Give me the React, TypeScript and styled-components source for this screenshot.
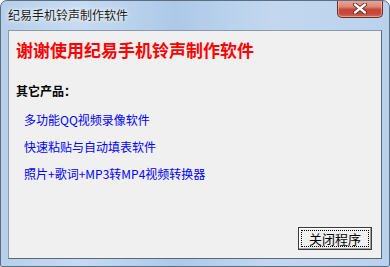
import styled, { createGlobalStyle } from 'styled-components';

const GlobalStyle = createGlobalStyle`
  html, body {
    margin: 0;
    padding: 0;
    background: #ffffff;
  }
  body {
    font-family: "Noto Sans CJK SC", "Liberation Sans", sans-serif;
  }
`;

const Frame = styled.div`
  width: 390px;
  height: 267px;
  box-sizing: border-box;
  display: flex;
  flex-direction: column;
  border: 1px solid #5a6e86;
  border-radius: 7px 7px 2px 2px;
  background: linear-gradient(90deg, #b6cfe9 0%, #c6dbf1 20%, #adc9e8 45%, #c3d8ef 70%, #b9d2ec 100%);
  overflow: hidden;
`;

const TitleBar = styled.div`
  height: 29px;
  display: flex;
  align-items: flex-start;
  justify-content: space-between;
  padding-left: 7px;
  padding-right: 6px;
`;

const Title = styled.div`
  margin-top: 7px;
  font-size: 12px;
  line-height: 14px;
  color: #1a1a1a;
  text-shadow: 0 0 6px #ffffff, 0 0 3px #ffffff;
`;

const CloseButton = styled.div`
  width: 46px;
  height: 18px;
  margin-top: -1px;
  box-sizing: border-box;
  border: 1px solid #6e2d25;
  border-top: none;
  border-radius: 0 0 5px 5px;
  background: linear-gradient(180deg, #e9a99c 0%, #dd8675 40%, #c9473a 55%, #c44a3c 80%, #d46a5c 100%);
  box-shadow: inset 0 0 0 1px rgba(255, 210, 200, 0.5);
  display: flex;
  align-items: center;
  justify-content: center;
`;

const Client = styled.div`
  flex: 1;
  margin: 0 7px;
  box-sizing: border-box;
  border: 1px solid #8a99ab;
  border-right-color: #5b6778;
  border-bottom-color: #5b6778;
  background: #f0f0f0;
  display: flex;
  flex-direction: column;
  padding: 9px 9px 8px 7px;
`;

const BottomEdge = styled.div`
  height: 7px;
`;

const Heading = styled.div`
  font-size: 17px;
  line-height: 20px;
  font-weight: bold;
  color: #ff0000;
`;

const SectionLabel = styled.div`
  margin-top: 24px;
  font-size: 12px;
  line-height: 14px;
  font-weight: bold;
  color: #000000;
`;

const LinkList = styled.div`
  display: flex;
  flex-direction: column;
  gap: 13px;
  margin-top: 15px;
  padding-left: 8px;
`;

const ProductLink = styled.div`
  font-size: 12px;
  line-height: 14px;
  color: #0000ff;
  cursor: pointer;
`;

const ButtonRow = styled.div`
  margin-top: auto;
  display: flex;
  justify-content: flex-end;
`;

const Button = styled.button`
  width: 74px;
  height: 23px;
  box-sizing: border-box;
  padding: 2px;
  border: 1px solid #3c3c3c;
  background: #f0f0f0;
  box-shadow: inset -1px -1px 0 #a0a0a0, inset 1px 1px 0 #ffffff;
  font-family: "Noto Sans CJK SC", "Liberation Sans", sans-serif;
  font-size: 13px;
  color: #000000;
  display: flex;
`;

const FocusRing = styled.span`
  flex: 1;
  border: 1px dotted #000000;
  display: flex;
  align-items: center;
  justify-content: center;
  line-height: 15px;
`;

const products = [
  '多功能QQ视频录像软件',
  '快速粘贴与自动填表软件',
  '照片+歌词+MP3转MP4视频转换器',
];

export default function App() {
  return (
    <>
      <GlobalStyle />
      <Frame>
        <TitleBar>
          <Title>纪易手机铃声制作软件</Title>
          <CloseButton>
            <svg width="14" height="11" viewBox="0 0 14 11">
              <path
                d="M2 1.5 L12 9.5 M12 1.5 L2 9.5"
                stroke="#4a1e18"
                strokeWidth="4"
                strokeLinecap="round"
              />
              <path
                d="M2 1.5 L12 9.5 M12 1.5 L2 9.5"
                stroke="#ffffff"
                strokeWidth="2.4"
                strokeLinecap="round"
              />
            </svg>
          </CloseButton>
        </TitleBar>
        <Client>
          <Heading>谢谢使用纪易手机铃声制作软件</Heading>
          <SectionLabel>其它产品：</SectionLabel>
          <LinkList>
            {products.map((p) => (
              <ProductLink key={p}>{p}</ProductLink>
            ))}
          </LinkList>
          <ButtonRow>
            <Button>
              <FocusRing>关闭程序</FocusRing>
            </Button>
          </ButtonRow>
        </Client>
        <BottomEdge />
      </Frame>
    </>
  );
}
